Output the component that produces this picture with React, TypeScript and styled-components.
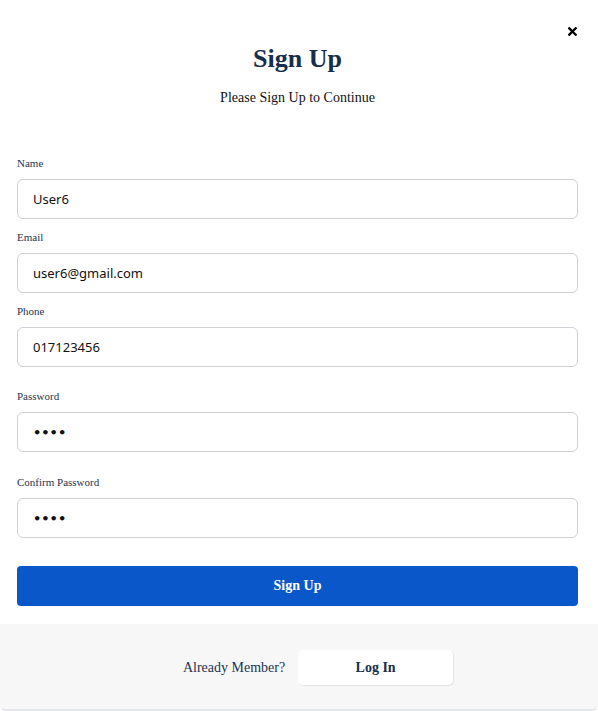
import React, { useState } from 'react';
import styled, { createGlobalStyle } from 'styled-components';

const GlobalStyle = createGlobalStyle`
  html, body {
    margin: 0;
    padding: 0;
    background: #ffffff;
  }
  body {
    font-family: "Liberation Serif", "Times New Roman", serif;
  }
`;

const Modal = styled.div`
  width: 598px;
  height: 709px;
  background: #ffffff;
  border-bottom-left-radius: 6px;
  border-bottom-right-radius: 6px;
  overflow: hidden;
  display: flex;
  flex-direction: column;
  border-bottom: 2px solid #e3e5e8;
`;

const Body = styled.div`
  padding: 25px 20px 18px 17px;
  display: flex;
  flex-direction: column;
`;

const CloseRow = styled.div`
  display: flex;
  justify-content: flex-end;
  height: 15px;
`;

const CloseButton = styled.button`
  border: none;
  background: none;
  padding: 0;
  width: 12px;
  height: 12px;
  display: flex;
  align-items: center;
  justify-content: center;
  cursor: pointer;
`;

const Title = styled.h1`
  margin: 3px 0 0;
  text-align: center;
  font-size: 26px;
  font-weight: bold;
  color: #172e4b;
  line-height: 32px;
`;

const Subtitle = styled.p`
  margin: 14px 0 0;
  text-align: center;
  font-size: 14px;
  color: #111111;
  line-height: 18px;
`;

const Form = styled.form`
  margin-top: 49px;
  display: flex;
  flex-direction: column;
`;

interface FieldProps {
  gap: number;
}

const Field = styled.div<FieldProps>`
  display: flex;
  flex-direction: column;
  margin-top: ${({ gap }) => gap}px;
`;

const Label = styled.label`
  font-size: 11px;
  color: #1b3454;
  line-height: 14px;
  margin-bottom: 9px;
`;

const Input = styled.input`
  box-sizing: border-box;
  width: 100%;
  height: 40px;
  border: 1px solid #cdd0d5;
  border-radius: 6px;
  padding: 0 15px;
  font-family: "Noto Sans", Tahoma, sans-serif;
  font-size: 13px;
  color: #111111;
  background: #ffffff;
  outline: none;

  &[type='password'] {
    font-family: "DejaVu Sans", sans-serif;
    font-size: 13px;
    font-weight: bold;
  }
`;

const SubmitButton = styled.button`
  margin-top: 28px;
  height: 40px;
  width: 100%;
  border: none;
  border-radius: 4px;
  background: #0957c9;
  color: #ffffff;
  font-family: "Liberation Serif", "Times New Roman", serif;
  font-size: 14px;
  font-weight: bold;
  cursor: pointer;
`;

const Footer = styled.div`
  flex: 1;
  background: #f7f7f7;
  display: flex;
  align-items: center;
  justify-content: center;
  gap: 13px;
  padding-left: 38px;
  padding-top: 2px;
`;

const FooterText = styled.span`
  font-size: 14px;
  color: #1b3454;
`;

const LoginButton = styled.button`
  width: 155px;
  height: 35px;
  background: #ffffff;
  border: none;
  border-radius: 5px;
  box-shadow: 1px 1px 1px rgba(0, 0, 0, 0.08);
  font-family: "Liberation Serif", "Times New Roman", serif;
  font-size: 14px;
  font-weight: bold;
  color: #172e4b;
  cursor: pointer;
`;

interface FieldDef {
  label: string;
  type: string;
  value: string;
  gap: number; // space above the field
}

const fields: FieldDef[] = [
  { label: 'Name', type: 'text', value: 'User6', gap: 0 },
  { label: 'Email', type: 'email', value: 'user6@gmail.com', gap: 11 },
  { label: 'Phone', type: 'tel', value: '017123456', gap: 11 },
  { label: 'Password', type: 'password', value: '1234', gap: 22 },
  { label: 'Confirm Password', type: 'password', value: '1234', gap: 23 },
];

const App: React.FC = () => {
  const [values, setValues] = useState<string[]>(fields.map((f) => f.value));

  const handleChange = (index: number, value: string) => {
    setValues((prev) => prev.map((v, i) => (i === index ? value : v)));
  };

  return (
    <>
      <GlobalStyle />
      <Modal>
        <Body>
          <CloseRow>
            <CloseButton aria-label="Close">
              <svg width="9" height="9" viewBox="0 0 9 9">
                <path d="M1.3 1.3 L7.7 7.7 M7.7 1.3 L1.3 7.7" stroke="#000" strokeWidth="2.3" strokeLinecap="square" />
              </svg>
            </CloseButton>
          </CloseRow>
          <Title>Sign Up</Title>
          <Subtitle>Please Sign Up to Continue</Subtitle>
          <Form onSubmit={(e) => e.preventDefault()}>
            {fields.map((field, index) => (
              <Field key={field.label} gap={field.gap}>
                <Label>{field.label}</Label>
                <Input
                  type={field.type}
                  value={values[index]}
                  onChange={(e) => handleChange(index, e.target.value)}
                />
              </Field>
            ))}
            <SubmitButton type="submit">Sign Up</SubmitButton>
          </Form>
        </Body>
        <Footer>
          <FooterText>Already Member?</FooterText>
          <LoginButton>Log In</LoginButton>
        </Footer>
      </Modal>
    </>
  );
};

export default App;
